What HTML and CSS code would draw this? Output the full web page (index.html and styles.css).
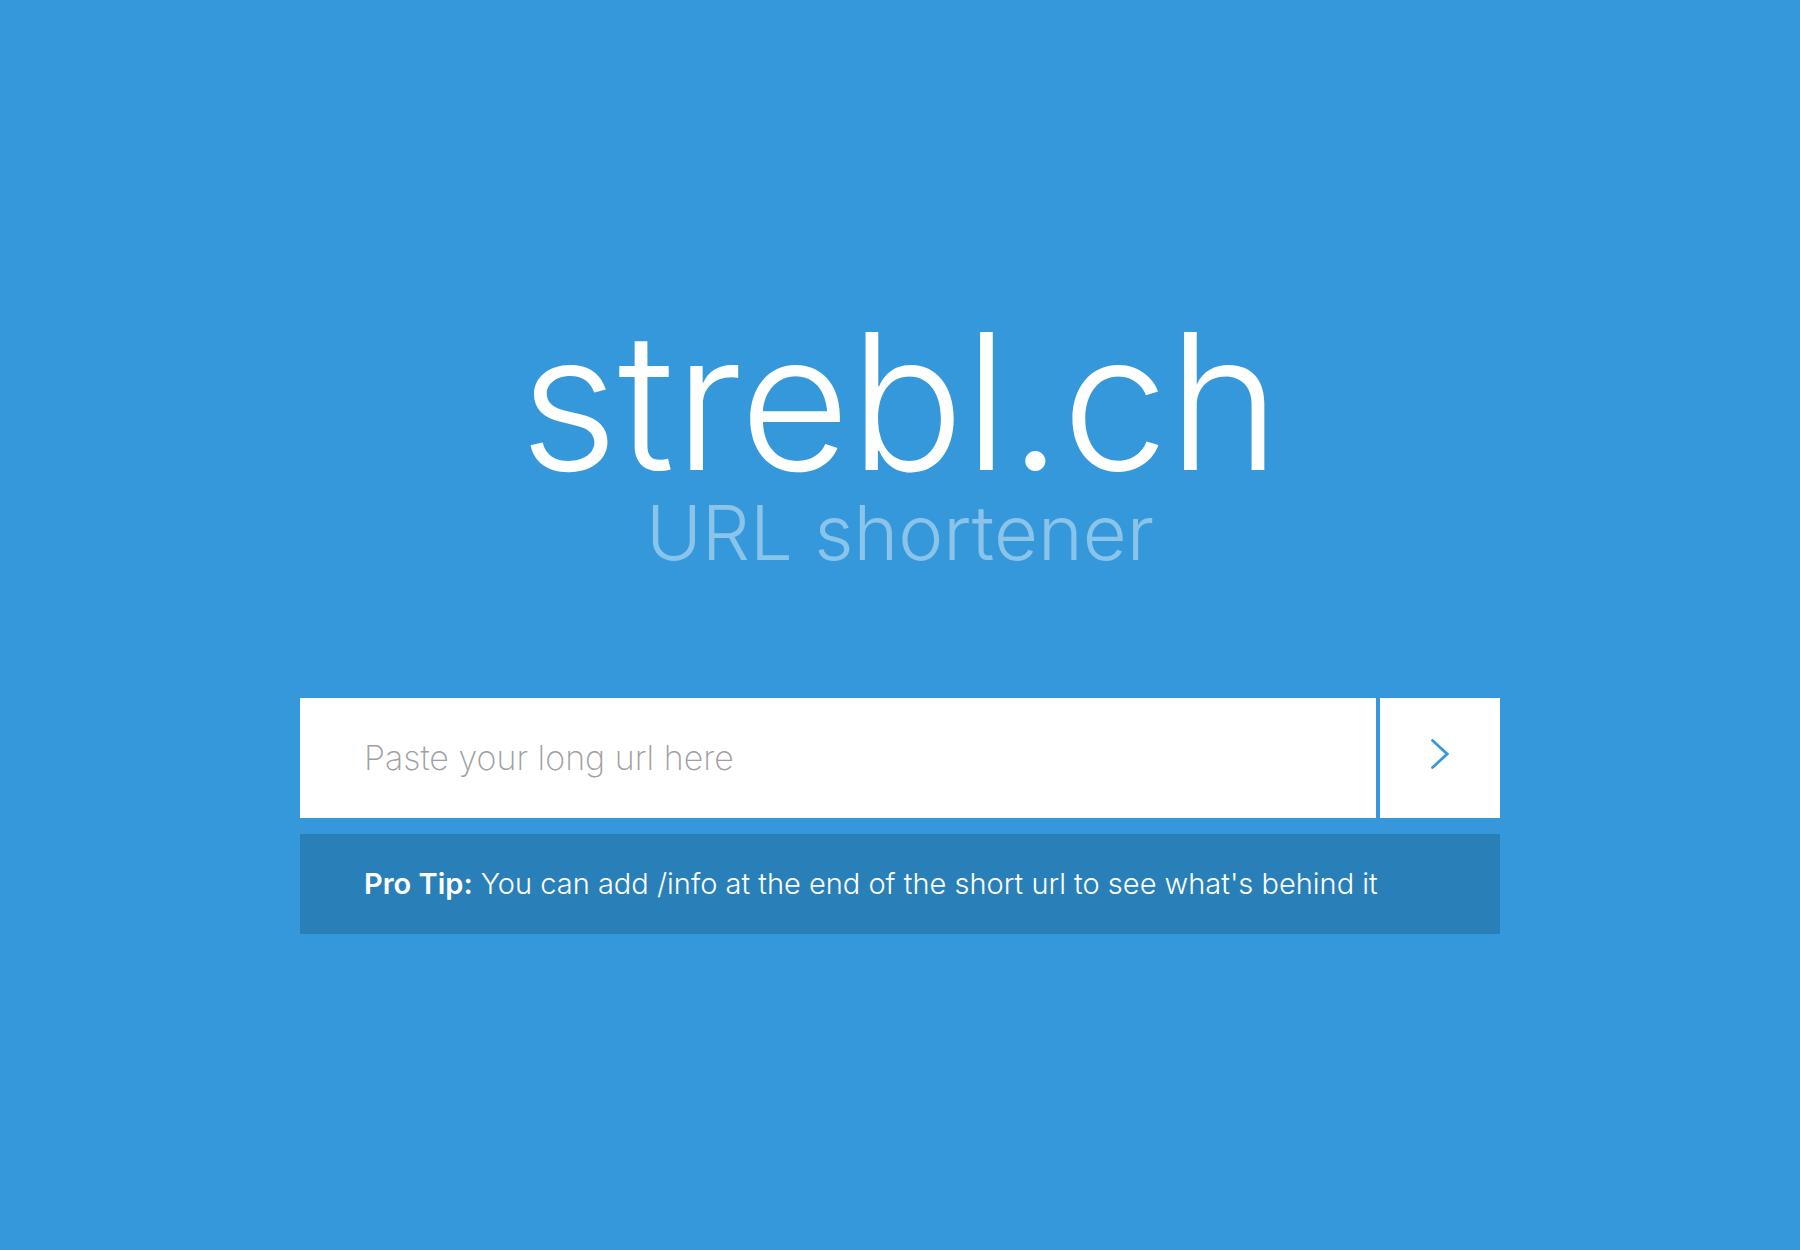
FILE: index.html
```
<!DOCTYPE html>
<html lang="en">
<head>
<meta charset="utf-8">
<meta name="viewport" content="width=device-width, initial-scale=1">
<title>strebl.ch URL shortener</title>
<link rel="stylesheet" href="styles.css">
</head>
<body>
<main class="page">
  <header class="brand">
    <h1 class="brand-name">strebl.ch</h1>
    <p class="brand-tagline">URL shortener</p>
  </header>
  <form class="shorten">
    <input class="shorten-url" type="text" placeholder="Paste your long url here" aria-label="Long url">
    <button class="shorten-submit" type="submit" aria-label="Shorten">
      <svg class="chevron" viewBox="0 0 18 30" aria-hidden="true"><path d="M1.500 1.500 16.200 15 1.500 28.500" fill="none" stroke="currentColor" stroke-width="2.700" stroke-linecap="round"/></svg>
    </button>
  </form>
  <p class="tip"><strong>Pro Tip:</strong> You can add /info at the end of the short url to see what's behind it</p>
</main>
</body>
</html>
```
FILE: styles.css
```
* {
  box-sizing: border-box;
}

body {
  margin: 0;
  background: #3498db;
  color: #fff;
  font-family: Inter, "Open Sans", sans-serif;
  font-weight: 300;
}

.page {
  display: flex;
  flex-direction: column;
  justify-content: center;
  width: 90%;
  max-width: 1200px;
  min-height: 100vh;
  margin: 0 auto;
}

.brand {
  margin-bottom: 120px;
  text-align: center;
}

.brand-name {
  margin: 0;
  font-size: 190px;
  font-weight: 300;
  line-height: 170px;
}

.brand-tagline {
  margin: 0;
  font-size: 76px;
  font-weight: 300;
  line-height: 92px;
  color: #8ac4ea;
}

.shorten {
  display: flex;
  gap: 4px;
  margin-bottom: 16px;
}

.shorten-url,
.shorten-submit {
  height: 120px;
  border: 0;
  border-radius: 0;
  background: #fff;
}

.shorten-url {
  flex: 1;
  min-width: 0;
  padding: 0 64px 2px;
  color: #3498db;
  font: inherit;
  font-size: 34px;
  font-weight: 200;
}

.shorten-url::placeholder {
  color: #a0a0a0;
  opacity: 1;
}

.shorten-submit {
  display: flex;
  align-items: center;
  justify-content: center;
  width: 120px;
  padding: 0 0 8px;
  color: #3498db;
  cursor: pointer;
}

.chevron {
  width: 18px;
  height: 30px;
}

.tip {
  margin: 0;
  padding: 30px 64px;
  background: #2980b9;
  font-size: 29px;
  line-height: 40px;
}

.tip strong {
  font-weight: 600;
}
```
